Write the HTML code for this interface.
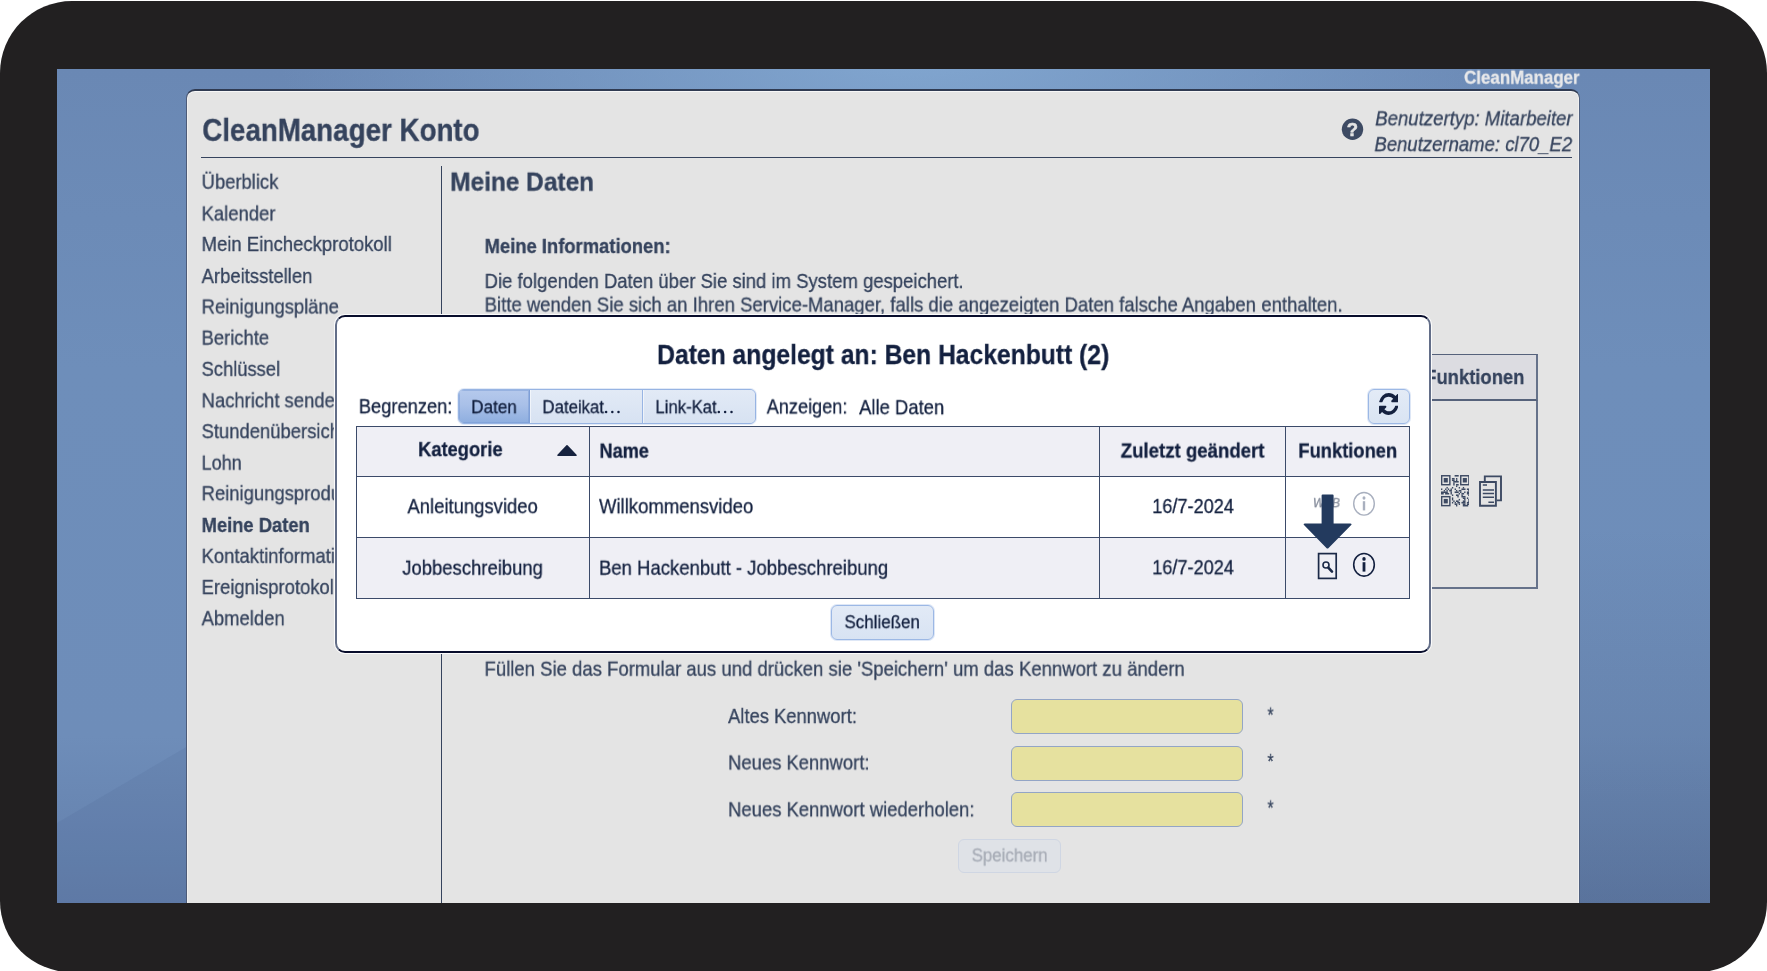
<!DOCTYPE html>
<html lang="de">
<head>
<meta charset="utf-8">
<title>CleanManager Konto</title>
<style>
*{box-sizing:border-box;margin:0;padding:0}
html,body{width:1767px;height:971px;overflow:hidden;background:#fff}
body{font-family:"Liberation Sans",sans-serif;color:#35435d;position:relative}
.tx{position:absolute;left:0;top:0;white-space:nowrap;line-height:40px;transform-origin:0 0;will-change:transform;-webkit-text-stroke:0.3px currentColor}
.bx{position:absolute;display:block}
#frame{position:absolute;left:0;top:1px;width:1767px;height:971px;background:#222021;border-radius:72px 72px 70px 71px}
#screen{position:absolute;left:57px;top:69px;width:1653px;height:834px;overflow:hidden;
 background:linear-gradient(180deg,#6a88b4 0%,#6e8eba 36%,#6e8db9 80%,#627eaa 100%)}
#rstrip{position:absolute;left:1523px;top:0;width:130px;height:834px;background:linear-gradient(180deg,rgba(70,90,125,0) 55%,rgba(70,90,125,.3) 100%)}
#glow{position:absolute;left:0;top:0;width:1653px;height:834px;
 background:radial-gradient(ellipse 640px 230px at 52% -2%,rgba(137,176,217,.75),rgba(137,176,217,0) 100%)}
#wedge{position:absolute;left:0;top:0;width:131px;height:834px;background:rgba(70,95,140,.13);
 clip-path:polygon(0 754px,131px 677px,131px 834px,0 834px)}
#panel{position:absolute;left:129px;top:20px;width:1394px;height:830px;background:#e4e4e4;
 border:solid;border-width:2px 1px 0 1px;border-color:#303b52 #50607f #50607f #4d5b78;border-radius:9px 9px 0 0;
 box-shadow:inset 0 1px 0 #f7f7f7,inset 1px 0 0 #efefef,inset -1px 0 0 #efefef}
.seg{border:1px solid #97b4e3;box-shadow:0 0 0 1px rgba(160,187,230,.3);border-radius:6px;overflow:hidden;background:#dbe5f4;display:flex}
.seg i{display:block;height:100%;border-right:1px solid #98b5e4;border-left:1px solid rgba(255,255,255,.55);background:linear-gradient(#e2eaf6,#d7e2f2)}
.seg i.on{background:linear-gradient(#b5c9ec 0%,#a9c0e8 45%,#8eaedf 100%);border-right-color:#7f9fd7;border-left:none;box-shadow:inset 0 0 0 1px rgba(115,150,210,.45)}
</style>
</head>
<body>
<div id="frame"></div>
<div id="screen"><div id="glow"></div><div id="wedge"></div><div id="rstrip"></div><div id="panel"></div></div>
<div class="tx" style="font-size:18.8px;font-weight:bold;color:#e9e9ea;transform:translate(1464.10px,57.75px) scaleX(0.8996)">CleanManager</div>
<div class="tx" style="font-size:31.1px;font-weight:bold;transform:translate(202.30px,110.85px) scaleX(0.8914)">CleanManager Konto</div>
<div class="bx" style="left:201px;top:157px;width:1371px;height:1px;background:#35435d"></div>
<div class="bx" style="left:441px;top:166px;width:1px;height:737px;background:#35435d"></div>
<div class="tx" style="font-size:20.85px;font-style:italic;transform:translate(1375.20px,98.35px) scaleX(0.8921)">Benutzertyp: Mitarbeiter</div>
<div class="tx" style="font-size:20.85px;font-style:italic;transform:translate(1374.40px,124.15px) scaleX(0.8885)">Benutzername: cl70_E2</div>
<svg class="bx" style="left:1341px;top:118px;will-change:transform" width="23" height="23" viewBox="0 0 23 23"><circle cx="11.5" cy="11.3" r="10.7" fill="#3d4a63"/><text x="11.5" y="17.9" text-anchor="middle" font-family="Liberation Sans" font-weight="bold" font-size="18.5" fill="#e4e4e4" stroke="#e4e4e4" stroke-width="0.5">?</text></svg>
<div class="tx" style="font-size:20.7px;transform:translate(201.60px,161.75px) scaleX(0.8897)">Überblick</div>
<div class="tx" style="font-size:20.7px;transform:translate(201.60px,193.45px) scaleX(0.8907)">Kalender</div>
<div class="tx" style="font-size:20.7px;transform:translate(201.60px,223.95px) scaleX(0.8941)">Mein Eincheckprotokoll</div>
<div class="tx" style="font-size:20.7px;transform:translate(201.60px,255.95px) scaleX(0.8917)">Arbeitsstellen</div>
<div class="tx" style="font-size:20.7px;transform:translate(201.60px,286.55px) scaleX(0.8916)">Reinigungspläne</div>
<div class="tx" style="font-size:20.7px;transform:translate(201.60px,317.65px) scaleX(0.8878)">Berichte</div>
<div class="tx" style="font-size:20.7px;transform:translate(201.60px,348.85px) scaleX(0.8860)">Schlüssel</div>
<div class="tx" style="font-size:20.7px;transform:translate(201.60px,380.35px) scaleX(0.8910)">Nachricht senden</div>
<div class="tx" style="font-size:20.7px;transform:translate(201.60px,411.15px) scaleX(0.8910)">Stundenübersicht</div>
<div class="tx" style="font-size:20.7px;transform:translate(201.60px,442.65px) scaleX(0.8728)">Lohn</div>
<div class="tx" style="font-size:20.7px;transform:translate(201.60px,473.25px) scaleX(0.8910)">Reinigungsprodukte</div>
<div class="tx" style="font-size:20.7px;font-weight:bold;transform:translate(201.60px,504.95px) scaleX(0.8874)">Meine Daten</div>
<div class="tx" style="font-size:20.7px;transform:translate(201.60px,535.85px) scaleX(0.8910)">Kontaktinformationen</div>
<div class="tx" style="font-size:20.7px;transform:translate(201.60px,567.05px) scaleX(0.8910)">Ereignisprotokoll</div>
<div class="tx" style="font-size:20.7px;transform:translate(201.60px,598.25px) scaleX(0.8910)">Abmelden</div>
<div class="tx" style="font-size:26.4px;font-weight:bold;transform:translate(450.20px,161.65px) scaleX(0.9254)">Meine Daten</div>
<div class="tx" style="font-size:20.1px;font-weight:bold;transform:translate(484.60px,226.05px) scaleX(0.9156)">Meine Informationen:</div>
<div class="tx" style="font-size:20.7px;transform:translate(484.60px,260.95px) scaleX(0.8941)">Die folgenden Daten über Sie sind im System gespeichert.</div>
<div class="tx" style="font-size:20.7px;transform:translate(484.60px,284.55px) scaleX(0.8956)">Bitte wenden Sie sich an Ihren Service-Manager, falls die angezeigten Daten falsche Angaben enthalten.</div>
<div class="bx" style="left:1380px;top:354px;width:158px;height:47px;background:#dcdce1;border:solid #56627b;border-width:1px 2px 2px 1px;border-right-color:#66728a"></div>
<div class="bx" style="left:1380px;top:401px;width:158px;height:188px;border:solid #66728a;border-width:0 2px 2px 1px"></div>
<div class="tx" style="font-size:20.7px;font-weight:bold;transform:translate(1425.13px,356.95px) scaleX(0.8910)">Funktionen</div>
<svg class="bx" style="left:1440.5px;top:475.3px" width="28.6" height="31.4" viewBox="0 0 28.6 31.4"><g fill="#3d4a63"><rect x="13.62" y="0.00" width="4.09" height="1.58"/><rect x="10.90" y="2.99" width="2.72" height="1.58"/><rect x="14.98" y="2.99" width="1.36" height="1.58"/><rect x="10.90" y="4.49" width="2.72" height="1.58"/><rect x="14.98" y="4.49" width="1.36" height="1.58"/><rect x="12.26" y="5.98" width="5.45" height="1.58"/><rect x="12.26" y="7.48" width="1.36" height="1.58"/><rect x="12.26" y="8.97" width="1.36" height="1.58"/><rect x="14.98" y="8.97" width="2.72" height="1.58"/><rect x="14.98" y="10.47" width="1.36" height="1.58"/><rect x="5.45" y="11.96" width="1.36" height="1.58"/><rect x="10.90" y="11.96" width="1.36" height="1.58"/><rect x="17.70" y="11.96" width="1.36" height="1.58"/><rect x="21.79" y="11.96" width="1.36" height="1.58"/><rect x="0.00" y="13.46" width="1.36" height="1.58"/><rect x="4.09" y="13.46" width="1.36" height="1.58"/><rect x="6.81" y="13.46" width="1.36" height="1.58"/><rect x="9.53" y="13.46" width="1.36" height="1.58"/><rect x="13.62" y="13.46" width="1.36" height="1.58"/><rect x="20.43" y="13.46" width="4.09" height="1.58"/><rect x="25.88" y="13.46" width="2.72" height="1.58"/><rect x="2.72" y="14.95" width="1.36" height="1.58"/><rect x="5.45" y="14.95" width="1.36" height="1.58"/><rect x="8.17" y="14.95" width="2.72" height="1.58"/><rect x="14.98" y="14.95" width="1.36" height="1.58"/><rect x="17.70" y="14.95" width="2.72" height="1.58"/><rect x="27.24" y="14.95" width="1.36" height="1.58"/><rect x="0.00" y="16.45" width="6.81" height="1.58"/><rect x="9.53" y="16.45" width="1.36" height="1.58"/><rect x="13.62" y="16.45" width="4.09" height="1.58"/><rect x="19.07" y="16.45" width="1.36" height="1.58"/><rect x="23.15" y="16.45" width="1.36" height="1.58"/><rect x="25.88" y="16.45" width="2.72" height="1.58"/><rect x="0.00" y="17.94" width="2.72" height="1.58"/><rect x="4.09" y="17.94" width="4.09" height="1.58"/><rect x="9.53" y="17.94" width="1.36" height="1.58"/><rect x="17.70" y="17.94" width="1.36" height="1.58"/><rect x="20.43" y="17.94" width="2.72" height="1.58"/><rect x="25.88" y="17.94" width="2.72" height="1.58"/><rect x="10.90" y="19.44" width="1.36" height="1.58"/><rect x="14.98" y="19.44" width="2.72" height="1.58"/><rect x="20.43" y="19.44" width="1.36" height="1.58"/><rect x="27.24" y="19.44" width="1.36" height="1.58"/><rect x="16.34" y="20.93" width="1.36" height="1.58"/><rect x="20.43" y="20.93" width="4.09" height="1.58"/><rect x="10.90" y="22.43" width="1.36" height="1.58"/><rect x="21.79" y="22.43" width="2.72" height="1.58"/><rect x="25.88" y="22.43" width="1.36" height="1.58"/><rect x="10.90" y="23.92" width="1.36" height="1.58"/><rect x="17.70" y="23.92" width="1.36" height="1.58"/><rect x="23.15" y="23.92" width="1.36" height="1.58"/><rect x="27.24" y="23.92" width="1.36" height="1.58"/><rect x="12.26" y="25.42" width="1.36" height="1.58"/><rect x="14.98" y="25.42" width="2.72" height="1.58"/><rect x="21.79" y="25.42" width="2.72" height="1.58"/><rect x="27.24" y="25.42" width="1.36" height="1.58"/><rect x="10.90" y="26.91" width="1.36" height="1.58"/><rect x="13.62" y="26.91" width="1.36" height="1.58"/><rect x="16.34" y="26.91" width="2.72" height="1.58"/><rect x="20.43" y="26.91" width="4.09" height="1.58"/><rect x="25.88" y="26.91" width="2.72" height="1.58"/><rect x="13.62" y="28.41" width="2.72" height="1.58"/><rect x="17.70" y="28.41" width="1.36" height="1.58"/><rect x="21.79" y="28.41" width="2.72" height="1.58"/><rect x="25.88" y="28.41" width="2.72" height="1.58"/><rect x="14.98" y="29.90" width="1.36" height="1.58"/><rect x="21.79" y="29.90" width="5.45" height="1.58"/><rect x="0.68" y="0.75" width="8.17" height="8.97" fill="none" stroke="#3d4a63" stroke-width="1.43"/><rect x="2.72" y="2.99" width="4.09" height="4.49"/><rect x="19.75" y="0.75" width="8.17" height="8.97" fill="none" stroke="#3d4a63" stroke-width="1.43"/><rect x="21.79" y="2.99" width="4.09" height="4.49"/><rect x="0.68" y="21.68" width="8.17" height="8.97" fill="none" stroke="#3d4a63" stroke-width="1.43"/><rect x="2.72" y="23.92" width="4.09" height="4.49"/></g></svg>
<svg class="bx" style="left:1478px;top:474px" width="25" height="34" viewBox="0 0 25 34" fill="none" stroke="#3d4a63" stroke-width="1.9"><path d="M6.8 7.4V2.4H23V26.4H18.6"/><path d="M2 8H17.9V31.8H2Z" fill="#e4e4e4"/><path d="M4.8 10.9H9M4.8 16H16M4.8 19.6H16M4.8 23.2H16M10.4 28.3H16" stroke-width="1.5"/></svg>
<div class="tx" style="font-size:20.7px;transform:translate(484.50px,648.75px) scaleX(0.8957)">Füllen Sie das Formular aus und drücken sie 'Speichern' um das Kennwort zu ändern</div>
<div class="tx" style="font-size:20.7px;transform:translate(728.00px,696.05px) scaleX(0.8893)">Altes Kennwort:</div>
<div class="tx" style="font-size:20.7px;transform:translate(728.00px,742.45px) scaleX(0.8919)">Neues Kennwort:</div>
<div class="tx" style="font-size:20.7px;transform:translate(728.00px,789.35px) scaleX(0.8929)">Neues Kennwort wiederholen:</div>
<div class="bx" style="left:1011px;top:699px;width:232px;height:35px;background:#e6e19f;border:1px solid #93a5c6;border-radius:6px"></div>
<div class="bx" style="left:1011px;top:746px;width:232px;height:35px;background:#e6e19f;border:1px solid #93a5c6;border-radius:6px"></div>
<div class="bx" style="left:1011px;top:792px;width:232px;height:35px;background:#e6e19f;border:1px solid #93a5c6;border-radius:6px"></div>
<div class="tx" style="font-size:20.7px;transform:translate(1267.50px,694.55px) scaleX(0.7556)">*</div>
<div class="tx" style="font-size:20.7px;transform:translate(1267.50px,740.95px) scaleX(0.7556)">*</div>
<div class="tx" style="font-size:20.7px;transform:translate(1267.50px,787.45px) scaleX(0.7556)">*</div>
<div class="bx" style="left:958px;top:839px;width:103px;height:34px;background:#dfe2e7;border:1px solid #cfd6e3;border-radius:6px"></div>
<div class="tx" style="font-size:18.9px;color:#a7acb6;transform:translate(971.70px,835.45px) scaleX(0.8919)">Speichern</div>
<div class="bx" style="left:335px;top:315px;width:1096px;height:338px;background:#fff;border:2px solid;border-color:#080d2c #636e88;border-radius:10px;box-shadow:0 0 0 1px #fbfbfb"></div>
<div class="tx" style="font-size:27.7px;font-weight:bold;color:#13203f;transform:translate(657.20px,335.05px) scaleX(0.8904)">Daten angelegt an: Ben Hackenbutt (2)</div>
<div class="tx" style="font-size:20.7px;color:#13203f;transform:translate(358.80px,386.25px) scaleX(0.8850)">Begrenzen:</div>
<div class="bx seg" style="left:458px;top:389px;width:298px;height:35px"><i class="on" style="width:71px"></i><i style="width:113px"></i><i style="width:112px;border-right:none"></i></div>
<div class="tx" style="font-size:18.9px;color:#13203f;transform:translate(471.20px,387.25px) scaleX(0.9025)">Daten</div>
<div class="tx" style="font-size:18.9px;color:#13203f;transform:translate(542.40px,387.25px) scaleX(0.8887)">Dateikat</div>
<div class="tx" style="font-size:18.9px;color:#13203f;transform:translate(655.40px,387.25px) scaleX(0.8844)">Link-Kat</div>
<svg class="bx" style="left:600px;top:408px" width="140" height="8" viewBox="0 0 140 8" fill="#13203f"><circle cx="6.1" cy="4" r="1.25"/><circle cx="12.3" cy="4" r="1.25"/><circle cx="18.5" cy="4" r="1.25"/><circle cx="118.8" cy="4" r="1.25"/><circle cx="125.1" cy="4" r="1.25"/><circle cx="131.5" cy="4" r="1.25"/></svg>
<div class="tx" style="font-size:20.7px;color:#13203f;transform:translate(766.70px,386.45px) scaleX(0.8766)">Anzeigen:</div>
<div class="tx" style="font-size:20.7px;color:#13203f;transform:translate(859.10px,387.25px) scaleX(0.8908)">Alle Daten</div>
<div class="bx" style="left:1368px;top:389px;width:42px;height:35px;background:linear-gradient(#e3ebf6,#d9e4f3);border:1px solid #9cb8e5;box-shadow:0 0 0 1px rgba(160,187,230,.35);border-radius:6px"></div>
<svg class="bx" style="left:1378.5px;top:393px" width="19.6" height="22" viewBox="0 0 1536 1536" preserveAspectRatio="none"><path fill="#14213f" d="M1511 928q0 5-1 7-64 268-268 434.500T764 1536q-146 0-282.500-55T238 1324l-129 129q-19 19-45 19t-45-19-19-45V960q0-26 19-45t45-19h448q26 0 45 19t19 45-19 45l-137 137q71 66 161 102t187 36q134 0 250-65t186-179q11-17 53-117 8-23 30-23h192q13 0 22.500 9.500t9.500 22.500zm25-800v448q0 26-19 45t-45 19h-448q-26 0-45-19t-19-45 19-45l138-138Q969 256 768 256q-134 0-250 65T332 500q-11 17-53 117-8 23-30 23H50q-13 0-22.500-9.500T18 608v-7q65-268 270-434.500T768 0q146 0 284 55.500T1297 212l130-129q19-19 45-19t45 19 19 45z"/></svg>
<div class="bx" style="left:356px;top:426px;width:1054px;height:173px;background:#fff"></div>
<div class="bx" style="left:356px;top:426px;width:1054px;height:50px;background:#efeff5"></div>
<div class="bx" style="left:356px;top:537px;width:1054px;height:61px;background:#efeff5"></div>
<div class="bx" style="left:356px;top:426px;width:1px;height:173px;background:#3b4a69"></div>
<div class="bx" style="left:589px;top:426px;width:1px;height:173px;background:#3b4a69"></div>
<div class="bx" style="left:1099px;top:426px;width:1px;height:173px;background:#3b4a69"></div>
<div class="bx" style="left:1285px;top:426px;width:1px;height:173px;background:#3b4a69"></div>
<div class="bx" style="left:1409px;top:426px;width:1px;height:173px;background:#3b4a69"></div>
<div class="bx" style="left:356px;top:426px;width:1054px;height:1px;background:#3b4a69"></div>
<div class="bx" style="left:356px;top:476px;width:1054px;height:1px;background:#3b4a69"></div>
<div class="bx" style="left:356px;top:537px;width:1054px;height:1px;background:#3b4a69"></div>
<div class="bx" style="left:356px;top:598px;width:1054px;height:1px;background:#3b4a69"></div>
<div class="tx" style="font-size:20.7px;font-weight:bold;color:#13203f;transform:translate(418.10px,429.15px) scaleX(0.8850)">Kategorie</div>
<svg class="bx" style="left:556px;top:444px" width="22" height="13" viewBox="0 0 22 13"><path d="M2 11.2 L11 1.9 L20 11.2 Z" fill="#17233f" stroke="#17233f" stroke-width="1.6" stroke-linejoin="round"/></svg>
<div class="tx" style="font-size:20.7px;font-weight:bold;color:#13203f;transform:translate(599.50px,430.65px) scaleX(0.8766)">Name</div>
<div class="tx" style="font-size:20.7px;font-weight:bold;color:#13203f;transform:translate(1120.70px,430.55px) scaleX(0.9002)">Zuletzt geändert</div>
<div class="tx" style="font-size:20.7px;font-weight:bold;color:#13203f;transform:translate(1298.30px,430.55px) scaleX(0.8868)">Funktionen</div>
<div class="tx" style="font-size:20.7px;color:#13203f;transform:translate(407.40px,486.25px) scaleX(0.8930)">Anleitungsvideo</div>
<div class="tx" style="font-size:20.7px;color:#13203f;transform:translate(599.00px,486.25px) scaleX(0.8943)">Willkommensvideo</div>
<div class="tx" style="font-size:20.7px;color:#13203f;transform:translate(1152.20px,486.05px) scaleX(0.8761)">16/7-2024</div>
<div class="tx" style="font-size:20.7px;color:#13203f;transform:translate(402.30px,547.75px) scaleX(0.8923)">Jobbeschreibung</div>
<div class="tx" style="font-size:20.7px;color:#13203f;transform:translate(599.00px,547.75px) scaleX(0.8946)">Ben Hackenbutt - Jobbeschreibung</div>
<div class="tx" style="font-size:20.7px;color:#13203f;transform:translate(1152.20px,547.25px) scaleX(0.8761)">16/7-2024</div>
<div class="tx" style="font-size:12.0px;font-style:italic;color:#858c9b;transform:translate(1313.00px,483.15px) scaleX(0.9879)">WEB</div>
<svg class="bx" style="left:1351.5px;top:491px" width="24" height="26" viewBox="0 0 24 26"><ellipse cx="12" cy="12.8" rx="10.3" ry="11.3" fill="none" stroke="#a9b0bf" stroke-width="1.4"/><ellipse cx="12" cy="7" rx="1.5" ry="1.7" fill="#a9b0bf"/><rect x="10.8" y="10.2" width="2.4" height="9.2" fill="#a9b0bf"/></svg>
<svg class="bx" style="left:1317px;top:552px" width="21" height="28" viewBox="0 0 21 28"><rect x="1.6" y="1.6" width="17.6" height="24.8" fill="none" stroke="#1b2947" stroke-width="1.7"/><circle cx="9" cy="13" r="3" fill="none" stroke="#1b2947" stroke-width="1.6"/><path d="M11.3 15.6 L15 19.6" stroke="#1b2947" stroke-width="2.6" stroke-linecap="round"/></svg>
<svg class="bx" style="left:1351.5px;top:552px" width="24" height="26" viewBox="0 0 24 26"><ellipse cx="12" cy="12.8" rx="10.3" ry="11.3" fill="none" stroke="#13203f" stroke-width="1.6"/><ellipse cx="12" cy="6.9" rx="1.7" ry="1.9" fill="#13203f"/><rect x="10.6" y="10.2" width="2.8" height="9.4" fill="#13203f"/></svg>
<svg class="bx" style="left:1300px;top:492px" width="56" height="60" viewBox="0 0 56 60"><path d="M22.6 2.6 H32.6 Q33.6 2.6 33.6 3.6 V31.5 H50.4 Q52.4 31.5 51.2 33 L28.6 56 Q27.5 57 26.4 56 L4.0 33 Q2.8 31.5 4.8 31.5 H21.6 V3.6 Q21.6 2.6 22.6 2.6 Z" fill="#233a5e"/></svg>
<div class="bx" style="left:831px;top:605px;width:103px;height:35px;background:linear-gradient(#e2eaf6,#d8e3f3);border:1px solid #9cb8e5;box-shadow:0 0 0 1px rgba(160,187,230,.35);border-radius:6px"></div>
<div class="tx" style="font-size:18.9px;color:#13203f;transform:translate(844.50px,602.25px) scaleX(0.8970)">Schließen</div>
</body>
</html>
